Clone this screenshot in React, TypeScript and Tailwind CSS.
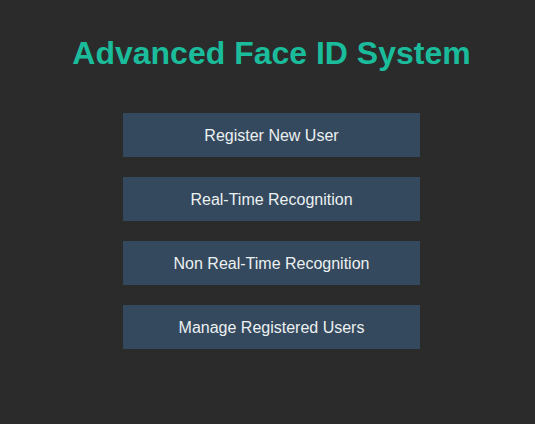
const items = [
  "Register New User",
  "Real-Time Recognition",
  "Non Real-Time Recognition",
  "Manage Registered Users",
];

export default function App() {
  return (
    <div
      className="min-h-[424px] bg-[#2b2b2b] flex flex-col items-center pt-[35px] pl-[8px]"
      style={{ fontFamily: '"Liberation Sans", Arial, sans-serif' }}
    >
      <h1 className="text-[32px] leading-[37px] font-bold text-[#1abc9c]">
        Advanced Face ID System
      </h1>
      <div className="mt-[41px] flex flex-col gap-[20px]">
        {items.map((label) => (
          <button
            key={label}
            className="w-[297px] h-[44px] pt-[1px] bg-[#34495e] text-[#ecf0f1] text-[16px]"
          >
            {label}
          </button>
        ))}
      </div>
    </div>
  );
}
